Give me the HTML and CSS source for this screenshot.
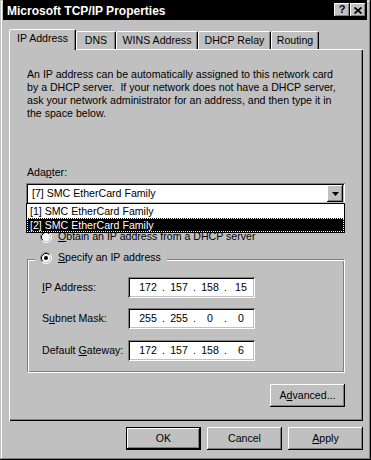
FILE: index.html
```html
<!DOCTYPE html>
<html>
<head>
<meta charset="utf-8">
<link rel="stylesheet" href="styles.css">
</head>
<body>
<div class="window">
  <div class="titlebar">
    <span class="title">Microsoft TCP/IP Properties</span>
    <div class="cap-btns">
      <div class="cap-btn help">?</div>
      <div class="cap-btn close"><svg width="8" height="7" viewBox="0 0 8 7"><path d="M0.5 0.5 L7.5 6.5 M7.5 0.5 L0.5 6.5" stroke="#000" stroke-width="1.7" fill="none"/></svg></div>
    </div>
  </div>
  <div class="body">
    <div class="tabs">
      <div class="tab active w-ip">IP Address</div>
      <div class="tab w-dns">DNS</div>
      <div class="tab w-wins">WINS Address</div>
      <div class="tab w-dhcp">DHCP Relay</div>
      <div class="tab w-route">Routing</div>
    </div>
    <div class="panel">
      <p class="intro">An IP address can be automatically assigned to this network card<br>by a DHCP server.&nbsp; If your network does not have a DHCP server,<br>ask your network administrator for an address, and then type it in<br>the space below.</p>
      <div class="label">Ada<u>p</u>ter:</div>
      <div class="combo">
        <span class="combo-text">[7] SMC EtherCard Family</span>
        <span class="combo-btn"><svg width="7" height="4" viewBox="0 0 7 4"><path d="M0 0 H7 L3.5 4 Z" fill="#000"/></svg></span>
        <div class="dropdown">
          <div class="item">[1] SMC EtherCard Family</div>
          <div class="item selected">[2] SMC EtherCard Family</div>
        </div>
      </div>
      <div class="radio-row">
        <svg class="radio" width="12" height="12" viewBox="0 0 12 12"><circle cx="6" cy="6" r="5" fill="#fff"/><path d="M2.11 9.89 A5.5 5.5 0 0 1 9.89 2.11" stroke="#808080" fill="none"/><path d="M9.89 2.11 A5.5 5.5 0 0 1 2.11 9.89" stroke="#fff" fill="none"/><path d="M2.82 9.18 A4.5 4.5 0 0 1 9.18 2.82" stroke="#000" fill="none"/><path d="M9.18 2.82 A4.5 4.5 0 0 1 2.82 9.18" stroke="#c0c0c0" fill="none"/></svg>
        <span><u>O</u>btain an IP address from a DHCP server</span>
      </div>
      <div class="group">
        <div class="legend">
          <svg class="radio" width="12" height="12" viewBox="0 0 12 12"><circle cx="6" cy="6" r="5" fill="#fff"/><path d="M2.11 9.89 A5.5 5.5 0 0 1 9.89 2.11" stroke="#808080" fill="none"/><path d="M9.89 2.11 A5.5 5.5 0 0 1 2.11 9.89" stroke="#fff" fill="none"/><path d="M2.82 9.18 A4.5 4.5 0 0 1 9.18 2.82" stroke="#000" fill="none"/><path d="M9.18 2.82 A4.5 4.5 0 0 1 2.82 9.18" stroke="#c0c0c0" fill="none"/><circle cx="6" cy="6" r="2" fill="#000"/></svg>
          <span><u>S</u>pecify an IP address</span>
        </div>
        <div class="field-row first">
          <span class="field-label"><u>I</u>P Address:</span>
          <div class="ipfield"><span class="oct">172</span><span class="dot">.</span><span class="oct">157</span><span class="dot">.</span><span class="oct">158</span><span class="dot">.</span><span class="oct">15</span></div>
        </div>
        <div class="field-row">
          <span class="field-label">S<u>u</u>bnet Mask:</span>
          <div class="ipfield"><span class="oct">255</span><span class="dot">.</span><span class="oct">255</span><span class="dot">.</span><span class="oct">0</span><span class="dot">.</span><span class="oct">0</span></div>
        </div>
        <div class="field-row last">
          <span class="field-label">Default <u>G</u>ateway:</span>
          <div class="ipfield"><span class="oct">172</span><span class="dot">.</span><span class="oct">157</span><span class="dot">.</span><span class="oct">158</span><span class="dot">.</span><span class="oct">6</span></div>
        </div>
      </div>
      <div class="adv-row">
        <button class="btn">A<u>d</u>vanced...</button>
      </div>
    </div>
    <div class="actions">
      <button class="btn default">OK</button>
      <button class="btn">Cancel</button>
      <button class="btn"><u>A</u>pply</button>
    </div>
  </div>
</div>
</body>
</html>
```

FILE: styles.css
```css
html, body {
  margin: 0;
  padding: 0;
  background: #c0c0c0;
}
body {
  font-family: "Liberation Sans", Arial, sans-serif;
  font-size: 10.6px;
  line-height: 13px;
  color: #000;
}
.window {
  width: 371px;
  height: 460px;
  box-sizing: border-box;
  background: #c0c0c0;
  padding: 0 2px 2px 2px;
  box-shadow: inset -1px -1px #000, inset 1px 1px #c0c0c0, inset -2px -2px #808080, inset 2px 2px #fff;
  overflow: hidden;
}
.titlebar {
  height: 20px;
  margin: 0 2px 0 1px;
  background: #000;
  color: #fff;
  display: flex;
  align-items: flex-start;
  justify-content: space-between;
  padding: 0 1px 0 4px;
}
.title {
  font-weight: bold;
  font-size: 12px;
  margin-top: 5px;
  line-height: 13px;
  white-space: nowrap;
}
.cap-btns {
  display: flex;
  margin-top: 3px;
}
.cap-btn {
  width: 16px;
  height: 14px;
  box-sizing: border-box;
  background: #c0c0c0;
  box-shadow: inset -1px -1px #000, inset 1px 1px #fff, inset -2px -2px #808080;
  display: flex;
  align-items: center;
  justify-content: center;
  color: #000;
  font-weight: bold;
  font-size: 11px;
  line-height: 11px;
}
.cap-btn.help {
  padding-bottom: 1px;
}
.body {
  padding: 9px 6px 0 7px;
}
.tabs {
  display: flex;
  align-items: flex-end;
  height: 20px;
  position: relative;
  z-index: 1;
}
.tab {
  box-sizing: border-box;
  height: 18px;
  border: 1px solid;
  border-bottom: 0;
  border-color: #fff #000 transparent #fff;
  border-radius: 2px 2px 0 0;
  box-shadow: inset -1px 0 #808080;
  padding-top: 2px;
  text-align: center;
  background: #c0c0c0;
  white-space: nowrap;
}
.tab.active {
  height: 21px;
  margin-bottom: -1px;
}
.w-ip { width: 67px; }
.w-dns { width: 40px; }
.w-wins { width: 82px; }
.w-dhcp { width: 73px; }
.w-route { width: 48px; }
.panel {
  height: 372px;
  box-sizing: border-box;
  padding: 19px 18px 0 17px;
  box-shadow: inset 1px 1px #fff, inset -1px -1px #000, inset -2px -2px #808080;
}
.intro {
  margin: 0 0 0 1px;
  white-space: nowrap;
}
.label {
  margin: 46px 0 0 1px;
}
.combo {
  position: relative;
  height: 21px;
  margin-top: 4px;
  box-sizing: border-box;
  padding: 2px;
  background: #fff;
  box-shadow: inset 1px 1px #808080, inset -1px -1px #fff, inset 2px 2px #000, inset -2px -2px #c0c0c0;
  display: flex;
  align-items: center;
}
.combo-text {
  flex: 1;
  padding-left: 4px;
}
.combo-btn {
  width: 16px;
  height: 17px;
  background: #c0c0c0;
  box-shadow: inset -1px -1px #000, inset 1px 1px #fff, inset -2px -2px #808080;
  display: flex;
  align-items: center;
  justify-content: center;
}
.dropdown {
  position: absolute;
  left: 0;
  top: 20px;
  width: 100%;
  box-sizing: border-box;
  border: 1px solid #000;
  background: #fff;
  z-index: 2;
}
.item {
  height: 14px;
  line-height: 14px;
  padding-left: 3px;
}
.item.selected {
  background: #000;
  color: #fff;
  outline: 1px dotted #fff;
  outline-offset: -1px;
}
.radio-row {
  display: flex;
  align-items: center;
  height: 13px;
  margin-top: 26px;
  padding-left: 14px;
}
.radio {
  display: block;
  flex: none;
  margin-right: 6px;
}
.group {
  margin: 16px 0 0 1px;
  border: 1px solid;
  border-color: #808080 #fff #fff #808080;
  box-shadow: inset 1px 1px #fff, inset -1px -1px #808080;
  padding: 0 0 11px 0;
}
.legend {
  display: flex;
  align-items: center;
  width: max-content;
  margin: -9px 0 0 7px;
  padding: 0 6px 0 5px;
  background: #c0c0c0;
  height: 13px;
}
.field-row {
  display: flex;
  align-items: center;
  height: 21px;
  padding-left: 14px;
  margin-top: 10px;
}
.field-row.first {
  margin-top: 13px;
}
.field-row.last {
  margin-top: 11px;
}
.field-label {
  width: 86px;
}
.ipfield {
  width: 127px;
  height: 21px;
  box-sizing: border-box;
  background: #fff;
  box-shadow: inset 1px 1px #808080, inset -1px -1px #fff, inset 2px 2px #000, inset -2px -2px #c0c0c0;
  display: flex;
  align-items: center;
  padding-left: 9px;
}
.oct {
  width: 22px;
  text-align: center;
}
.dot {
  width: 9px;
  text-align: center;
}
.adv-row {
  display: flex;
  justify-content: flex-end;
  margin-top: 11px;
}
.btn {
  width: 75px;
  height: 23px;
  box-sizing: border-box;
  border: 0;
  padding: 0;
  margin: 0;
  background: #c0c0c0;
  box-shadow: inset -1px -1px #000, inset 1px 1px #fff, inset -2px -2px #808080;
  font: inherit;
  color: #000;
  display: flex;
  align-items: center;
  justify-content: center;
}
.btn.default {
  border: 1px solid #000;
}
.actions {
  display: flex;
  justify-content: flex-end;
  gap: 6px;
  margin-top: 6px;
}
```
